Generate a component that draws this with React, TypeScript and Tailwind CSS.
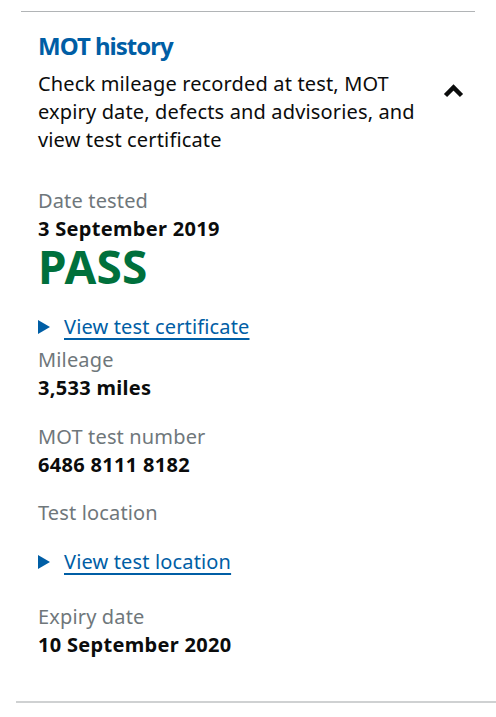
export default function App() {
  const font = { fontFamily: '"Noto Sans", "Liberation Sans", sans-serif' };
  return (
    <div className="w-[496px] h-[717px] bg-white text-[#0b0c0c]" style={font}>
      <div className="pt-[11px]">
        <div className="mx-[21px] border-t border-[#b1b4b6]" />
      </div>

      <div className="relative pt-[19px] pl-[38px] pr-[21px] text-[20px] leading-[28px] tracking-[0.15px]">
        <h2 className="text-[24px] leading-[30px] font-bold text-[#005ea5] tracking-[-1px]">MOT history</h2>
        <p className="mt-[9px] w-[392px]">
          Check mileage recorded at test, MOT expiry date, defects and advisories, and view test certificate
        </p>
        <svg
          className="absolute left-[443px] top-[71px]"
          width="21"
          height="15"
          viewBox="0 0 21 15"
        >
          <path d="M2.5 12.5 L10.5 4.5 L18.5 12.5" fill="none" stroke="#0b0c0c" strokeWidth="4.5" />
        </svg>

        <div className="mt-[33px] text-[#6f777b]">Date tested</div>
        <div className="font-bold tracking-[0.3px]">3 September 2019</div>
        <div className="text-[46px] leading-[46px] font-bold text-[#00703c]">PASS</div>

        <div className="mt-[24px] flex items-center">
          <svg width="12" height="14" viewBox="0 0 12 14" className="mr-[14px]">
            <path d="M0 0 L12 7 L0 14 Z" fill="#005ea5" />
          </svg>
          <a className="text-[#005ea5] underline underline-offset-[4px]" href="#">View test certificate</a>
        </div>

        <div className="mt-[5px] text-[#6f777b]">Mileage</div>
        <div className="font-bold tracking-[0.3px]">3,533 miles</div>

        <div className="mt-[21px] text-[#6f777b]">MOT test number</div>
        <div className="font-bold tracking-[0.3px]">6486 8111 8182</div>

        <div className="mt-[20px] text-[#6f777b]">Test location</div>

        <div className="mt-[21px] flex items-center">
          <svg width="12" height="14" viewBox="0 0 12 14" className="mr-[14px]">
            <path d="M0 0 L12 7 L0 14 Z" fill="#005ea5" />
          </svg>
          <a className="text-[#005ea5] underline underline-offset-[4px]" href="#">View test location</a>
        </div>

        <div className="mt-[27px] text-[#6f777b]">Expiry date</div>
        <div className="font-bold tracking-[0.3px]">10 September 2020</div>
      </div>

      <div className="mt-[42px] ml-[16px] border-t-2 border-[#cfd1d2]" />
    </div>
  );
}
